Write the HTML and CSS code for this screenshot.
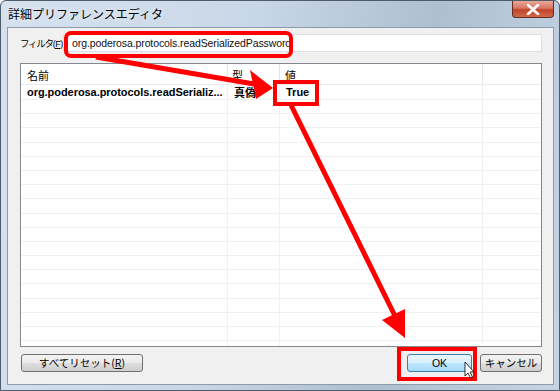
FILE: index.html
```html
<!DOCTYPE html>
<html lang="ja">
<head>
    <meta charset="UTF-8">
    <title>詳細プリファレンスエディタ</title>
    <link rel="stylesheet" href="styles.css">
</head>
<body>
    <div class="window">
        <div class="titlebar">
            <span class="title">詳細プリファレンスエディタ</span>
            <div class="close-btn">
                <svg width="14" height="11" viewBox="0 0 14 11"><path d="M2 1 L12 10 M12 1 L2 10" stroke="#fff" stroke-width="2.6" stroke-linecap="round"/></svg>
            </div>
        </div>
        <div class="client">
            <div class="filter-row">
                <label class="filter-label">フィルタ<span class="mn">(<u>F</u>)</span></label>
                <div class="filter-input">org.poderosa.protocols.readSerializedPassword</div>
            </div>

            <div class="listview">
                <div class="lv-header">
                    <div class="col c-name">名前</div>
                    <div class="col c-type">型</div>
                    <div class="col c-value">値</div>
                    <div class="col c-rest"></div>
                </div>
                <div class="lv-body">
                    <div class="lv-row first">
                        <div class="col c-name">org.poderosa.protocols.readSerializ...</div>
                        <div class="col c-type">真偽</div>
                        <div class="col c-value">True</div>
                        <div class="col c-rest"></div>
                    </div>
                    <div class="lv-row"><div class="col c-name"></div><div class="col c-type"></div><div class="col c-value"></div><div class="col c-rest"></div></div>
                    <div class="lv-row"><div class="col c-name"></div><div class="col c-type"></div><div class="col c-value"></div><div class="col c-rest"></div></div>
                    <div class="lv-row"><div class="col c-name"></div><div class="col c-type"></div><div class="col c-value"></div><div class="col c-rest"></div></div>
                    <div class="lv-row"><div class="col c-name"></div><div class="col c-type"></div><div class="col c-value"></div><div class="col c-rest"></div></div>
                    <div class="lv-row"><div class="col c-name"></div><div class="col c-type"></div><div class="col c-value"></div><div class="col c-rest"></div></div>
                    <div class="lv-row"><div class="col c-name"></div><div class="col c-type"></div><div class="col c-value"></div><div class="col c-rest"></div></div>
                    <div class="lv-row"><div class="col c-name"></div><div class="col c-type"></div><div class="col c-value"></div><div class="col c-rest"></div></div>
                    <div class="lv-row"><div class="col c-name"></div><div class="col c-type"></div><div class="col c-value"></div><div class="col c-rest"></div></div>
                    <div class="lv-row"><div class="col c-name"></div><div class="col c-type"></div><div class="col c-value"></div><div class="col c-rest"></div></div>
                    <div class="lv-row"><div class="col c-name"></div><div class="col c-type"></div><div class="col c-value"></div><div class="col c-rest"></div></div>
                    <div class="lv-row"><div class="col c-name"></div><div class="col c-type"></div><div class="col c-value"></div><div class="col c-rest"></div></div>
                    <div class="lv-row"><div class="col c-name"></div><div class="col c-type"></div><div class="col c-value"></div><div class="col c-rest"></div></div>
                    <div class="lv-row"><div class="col c-name"></div><div class="col c-type"></div><div class="col c-value"></div><div class="col c-rest"></div></div>
                    <div class="lv-row"><div class="col c-name"></div><div class="col c-type"></div><div class="col c-value"></div><div class="col c-rest"></div></div>
                    <div class="lv-row"><div class="col c-name"></div><div class="col c-type"></div><div class="col c-value"></div><div class="col c-rest"></div></div>
                    <div class="lv-row"><div class="col c-name"></div><div class="col c-type"></div><div class="col c-value"></div><div class="col c-rest"></div></div>
                    <div class="lv-row"><div class="col c-name"></div><div class="col c-type"></div><div class="col c-value"></div><div class="col c-rest"></div></div>
                    <div class="lv-row"><div class="col c-name"></div><div class="col c-type"></div><div class="col c-value"></div><div class="col c-rest"></div></div>
                    <div class="lv-row"><div class="col c-name"></div><div class="col c-type"></div><div class="col c-value"></div><div class="col c-rest"></div></div>
                </div>
            </div>

            <div class="button-row">
                <button class="btn btn-reset">すべてリセット(<u>R</u>)</button>
                <div class="spacer"></div>
                <button class="btn btn-ok">OK</button>
                <button class="btn btn-cancel">キャンセル</button>
            </div>
        </div>
    </div>

    <!-- annotations drawn on top of the screenshot -->
    <svg class="annotations" width="560" height="391" viewBox="0 0 560 391">
        <rect x="66" y="33" width="225" height="23" rx="5" fill="none" stroke="#f00" stroke-width="4"/>
        <rect x="275" y="82" width="42" height="22" fill="none" stroke="#f00" stroke-width="4"/>
        <rect x="399" y="349" width="76" height="30" fill="none" stroke="#f00" stroke-width="4"/>

        <line x1="96" y1="57" x2="254" y2="84" stroke="#f00" stroke-width="5"/>
        <polygon points="273,88 256,99 250,70" fill="#f00"/>

        <line x1="291" y1="105" x2="396" y2="318" stroke="#f00" stroke-width="5"/>
        <polygon points="405,338 382,320 405,309" fill="#f00"/>

        <path d="M465 362 L465 376 L468 373 L470.5 378 L472.5 377 L470 372 L474 372 Z" fill="#fff" stroke="#000" stroke-width="0.8"/>
    </svg>
</body>
</html>
```

FILE: styles.css
```css
body {
    margin: 0;
    width: 560px;
    height: 391px;
    overflow: hidden;
    background: #fff;
    font-family: "Noto Sans CJK JP", "Noto Sans", sans-serif;
    font-size: 11px;
    color: #000;
    position: relative;
}
.window {
    width: 560px;
    height: 391px;
    box-sizing: border-box;
    border: 1px solid #4e5b69;
    border-radius: 6px 6px 0 0;
    background: linear-gradient(100deg, #d5e1ee 0%, #c9d8e8 40%, #aebfd1 70%, #b7c8da 82%, #c6d5e4 100%);
    display: flex;
    flex-direction: column;
}
.titlebar {
    height: 26px;
    flex-shrink: 0;
    display: flex;
    align-items: flex-start;
    padding-left: 7px;
    padding-right: 5px;
}
.title {
    margin-top: 4px;
    font-size: 12px;
    color: #000;
    text-shadow: 0 0 6px #fff;
}
.close-btn {
    margin-left: auto;
    width: 42px;
    height: 17px;
    box-sizing: border-box;
    border: 1px solid #6b2a20;
    border-top: none;
    border-radius: 0 0 4px 4px;
    background: linear-gradient(#e9a99b 0%, #d8755f 45%, #c2422a 55%, #cf6a48 100%);
    display: flex;
    align-items: center;
    justify-content: center;
}
.client {
    flex: 1;
    min-height: 0;
    margin: 0 5px 5px 6px;
    border: 1px solid #8d9cad;
    background: #f0f0f0;
    display: flex;
    flex-direction: column;
    padding: 6px 11px 12px 12px;
}
.filter-row {
    display: flex;
    align-items: center;
    height: 18px;
    flex-shrink: 0;
}
.filter-label {
    width: 43px;
    flex-shrink: 0;
    font-size: 9.5px;
    letter-spacing: -1.3px;
    white-space: nowrap;
    line-height: 18px;
}
.filter-label .mn {
    font-family: "Liberation Sans", sans-serif;
    font-size: 9px;
    letter-spacing: -0.5px;
}
.filter-input {
    flex: 1;
    height: 18px;
    box-sizing: border-box;
    border: 1px solid #dcdfe3;
    background: #fff;
    padding-left: 8px;
    font-family: "Liberation Sans", sans-serif;
    font-size: 10.5px;
    letter-spacing: -0.1px;
    line-height: 16px;
    color: #111;
}
.listview {
    margin-top: 11px;
    flex: 1;
    min-height: 0;
    border: 1px solid #828790;
    background: #fff;
    display: flex;
    flex-direction: column;
    overflow: hidden;
}
.lv-header {
    height: 20px;
    flex-shrink: 0;
    display: flex;
    border-bottom: 1px solid #eaeaea;
}
.lv-header .col {
    border-right: 1px solid #e3e5e8;
    padding-left: 6px;
    line-height: 22px;
    font-size: 11px;
}
.col {
    box-sizing: border-box;
    white-space: nowrap;
    overflow: hidden;
}
.c-name { width: 207px; }
.c-type { width: 52px; }
.c-value { width: 203px; }
.c-rest { flex: 1; border-right: none !important; }
.lv-header .c-type,
.lv-row .c-type { padding-left: 4px; }
.lv-header .c-value,
.lv-row .c-value { padding-left: 5px; }
.lv-row {
    height: 14.2px;
    display: flex;
    border-bottom: 1px solid #f0f0f0;
    box-sizing: border-box;
}
.lv-row.first {
    height: 15px;
}
.lv-row .col {
    border-right: 1px solid #f0f0f0;
    padding-left: 6px;
    font-weight: bold;
    line-height: 15px;
}
.lv-row .c-name {
    font-family: "Liberation Sans", sans-serif;
    font-size: 11px;
    letter-spacing: -0.05px;
}
.lv-row .c-value {
    font-family: "Liberation Sans", sans-serif;
    font-size: 11px;
}
.button-row {
    margin-top: 7px;
    display: flex;
    height: 18px;
    flex-shrink: 0;
}
.spacer { flex: 1; }
.btn {
    height: 18px;
    box-sizing: border-box;
    border: 1px solid #707070;
    border-radius: 3px;
    background: linear-gradient(#f2f2f2 0%, #ebebeb 48%, #dddddd 52%, #cfcfcf 100%);
    font-family: "Noto Sans CJK JP", sans-serif;
    font-size: 10.5px;
    padding: 0;
    line-height: 16px;
    color: #000;
}
.btn-reset {
    margin-left: 1px;
    width: 122px;
}
.btn-ok {
    width: 65px;
    border-color: #3c7fb1;
    background: linear-gradient(#eaf6fd 0%, #d9f0fc 48%, #bee6fd 52%, #a7d9f5 100%);
    font-family: "Liberation Sans", sans-serif;
}
.btn-cancel {
    width: 62px;
    margin-left: 8px;
}
.annotations {
    position: absolute;
    left: 0;
    top: 0;
    pointer-events: none;
}
```
